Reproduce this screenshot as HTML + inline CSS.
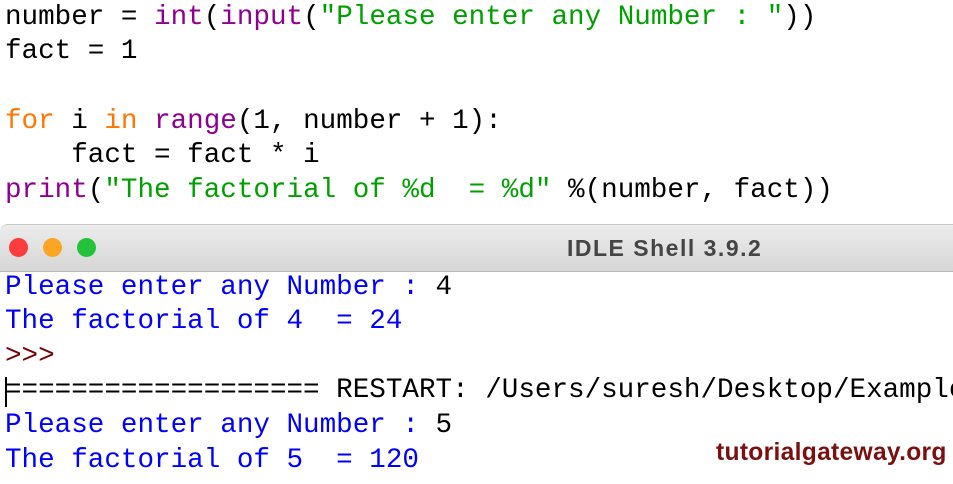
<!DOCTYPE html>
<html><head><style>
html,body{margin:0;padding:0;background:#fff;width:953px;height:484px;overflow:hidden}
#c{position:relative;width:953px;height:484px;overflow:hidden}
.l{position:absolute;left:5px;font-family:"Liberation Mono",monospace;font-size:27.6px;line-height:34px;white-space:pre;color:#000}
.k{color:#ff7700}.b{color:#900090}.s{color:#00a000}.u{color:#0000ff}.p{color:#770000}
#bar{position:absolute;left:0;top:224px;width:953px;height:46px;background:linear-gradient(#ececec,#d6d6d6);border-top:1px solid #c8c8c8;border-bottom:1px solid #b8b8b8;border-radius:8px 0 0 0}
.d{position:absolute;top:13px;width:19px;height:19px;border-radius:50%}
#t{position:absolute;left:567px;top:10px;font-family:"Liberation Sans",sans-serif;font-weight:bold;font-size:23px;letter-spacing:1.5px;color:#444}
#w{position:absolute;left:716px;top:439px;font-family:"Liberation Sans",sans-serif;font-weight:bold;font-size:24.6px;color:#7a1010;letter-spacing:0.3px}
</style></head><body><div id="c">
<div class="l" style="top:1px">number = <span class="b">int</span>(<span class="b">input</span>(<span class="s">"Please enter any Number : "</span>))</div>
<div class="l" style="top:35px">fact = 1</div>
<div class="l" style="top:105px"><span class="k">for</span> i <span class="k">in</span> <span class="b">range</span>(1, number + 1):</div>
<div class="l" style="top:139px">    fact = fact * i</div>
<div class="l" style="top:174px"><span class="b">print</span>(<span class="s">"The factorial of %d  = %d"</span> %(number, fact))</div>
<div id="bar">
<div class="d" style="left:9px;background:#fc3d3d"></div>
<div class="d" style="left:43px;background:#fca523"></div>
<div class="d" style="left:77px;background:#23c23a"></div>
<div id="t">IDLE Shell 3.9.2</div>
</div>
<div class="l u" style="top:271px">Please enter any Number : <span style="color:#000">4</span></div>
<div class="l u" style="top:305px">The factorial of 4  = 24</div>
<div class="l p" style="top:340px">&gt;&gt;&gt;</div>
<div class="l" style="top:374px">=================== RESTART: /Users/suresh/Desktop/Example.py</div>
<div style="position:absolute;left:5px;top:377px;width:2px;height:30px;background:#000"></div>
<div class="l u" style="top:409px">Please enter any Number : <span style="color:#000">5</span></div>
<div class="l u" style="top:444px">The factorial of 5  = 120</div>
<div id="w">tutorialgateway.org</div>
</div></body></html>
